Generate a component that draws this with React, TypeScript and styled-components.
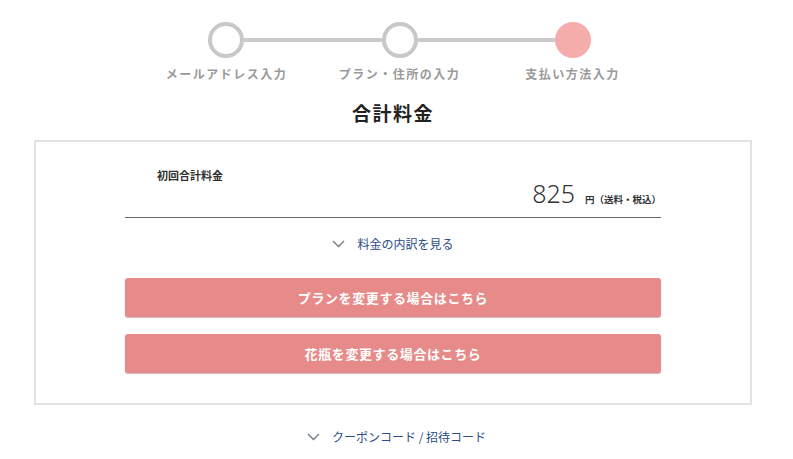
import React from "react";
import styled, { createGlobalStyle } from "styled-components";

const Global = createGlobalStyle`
  html, body { margin: 0; padding: 0; background: #fff; }
  body { font-family: "Noto Sans CJK JP", "Noto Sans", sans-serif; color: #333; }
`;

const Page = styled.div`
  padding-top: 22px;
  width: 793px;
`;

const Stepper = styled.div`
  width: 519px;
  margin-left: 140px;
`;

const CircleRow = styled.div`
  display: flex;
  align-items: center;
  padding: 0 68px;
`;

const Circle = styled.div<{ $active?: boolean }>`
  width: 36px;
  height: 36px;
  box-sizing: border-box;
  border-radius: 50%;
  flex: none;
  background: ${(p) => (p.$active ? "#f4adab" : "#fff")};
  border: ${(p) => (p.$active ? "none" : "4px solid #c8c8c8")};
`;

const Connector = styled.div`
  flex: 1;
  height: 4px;
  background: #cbcbcb;
`;

const Labels = styled.div`
  display: grid;
  grid-template-columns: repeat(3, 173px);
  margin-top: 8px;
`;

const Label = styled.div`
  text-align: center;
  font-size: 12px;
  line-height: 16px;
  font-weight: 700;
  color: #9a9a9a;
  letter-spacing: 1.5px;
`;

const Title = styled.h2`
  margin: 18px 0 0 34px;
  width: 718px;
  text-align: center;
  font-size: 19px;
  line-height: 26px;
  font-weight: 700;
  color: #222;
  letter-spacing: 1.5px;
`;

const Card = styled.section`
  margin: 14px 0 0 34px;
  width: 718px;
  box-sizing: border-box;
  border: 2px solid #e3e3e3;
  padding: 26px 0 30px;
`;

const Inner = styled.div`
  width: 536px;
  margin: 0 auto;
`;

const Summary = styled.div`
  border-bottom: 1px solid #666;
  padding-bottom: 12px;
`;

const SummaryLabel = styled.div`
  margin-left: 32px;
  font-size: 11px;
  line-height: 15px;
  font-weight: 700;
  color: #333;
`;

const PriceRow = styled.div`
  display: flex;
  justify-content: flex-end;
  align-items: baseline;
  margin-top: -2px;
  line-height: 24px;
`;

const Price = styled.span`
  font-family: "Noto Sans", sans-serif;
  font-size: 25px;
  line-height: 24px;
  font-weight: 300;
  color: #333;
`;

const Unit = styled.span`
  margin-left: 10px;
  font-size: 9.5px;
  line-height: 12px;
  font-weight: 700;
  color: #333;
`;

const DetailLink = styled.a<{ $top: number }>`
  display: flex;
  justify-content: center;
  align-items: center;
  gap: 12px;
  margin-top: ${(p) => p.$top}px;
  font-size: 12px;
  line-height: 16px;
  color: #2b4d86;
  text-decoration: none;
  cursor: pointer;
`;

const Button = styled.button<{ $top: number }>`
  display: block;
  width: 100%;
  height: 39px;
  margin-top: ${(p) => p.$top}px;
  border: none;
  border-radius: 3px;
  background: #e68b8a;
  box-shadow: 0 1px 1px rgba(120, 40, 40, 0.35);
  color: #fff;
  font-family: "Noto Sans CJK JP", "Noto Sans", sans-serif;
  font-size: 13px;
  font-weight: 700;
  letter-spacing: 0.6px;
  cursor: pointer;
`;

const Chevron = () => (
  <svg width="13" height="8" viewBox="0 0 13 8" fill="none">
    <path d="M1 1 L6.5 6.5 L12 1" stroke="#6f7780" strokeWidth="1.3" />
  </svg>
);

export default function App() {
  return (
    <Page>
      <Global />
      <Stepper>
        <CircleRow>
          <Circle />
          <Connector />
          <Circle />
          <Connector />
          <Circle $active />
        </CircleRow>
        <Labels>
          <Label>メールアドレス入力</Label>
          <Label>プラン・住所の入力</Label>
          <Label>支払い方法入力</Label>
        </Labels>
      </Stepper>
      <Title>合計料金</Title>
      <Card>
        <Inner>
          <Summary>
            <SummaryLabel>初回合計料金</SummaryLabel>
            <PriceRow>
              <Price>825</Price>
              <Unit>円（送料・税込）</Unit>
            </PriceRow>
          </Summary>
          <DetailLink $top={18}>
            <Chevron />
            <span>料金の内訳を見る</span>
          </DetailLink>
          <Button $top={26}>プランを変更する場合はこちら</Button>
          <Button $top={17}>花瓶を変更する場合はこちら</Button>
        </Inner>
      </Card>
      <DetailLink $top={24}>
        <Chevron />
        <span>クーポンコード / 招待コード</span>
      </DetailLink>
    </Page>
  );
}
